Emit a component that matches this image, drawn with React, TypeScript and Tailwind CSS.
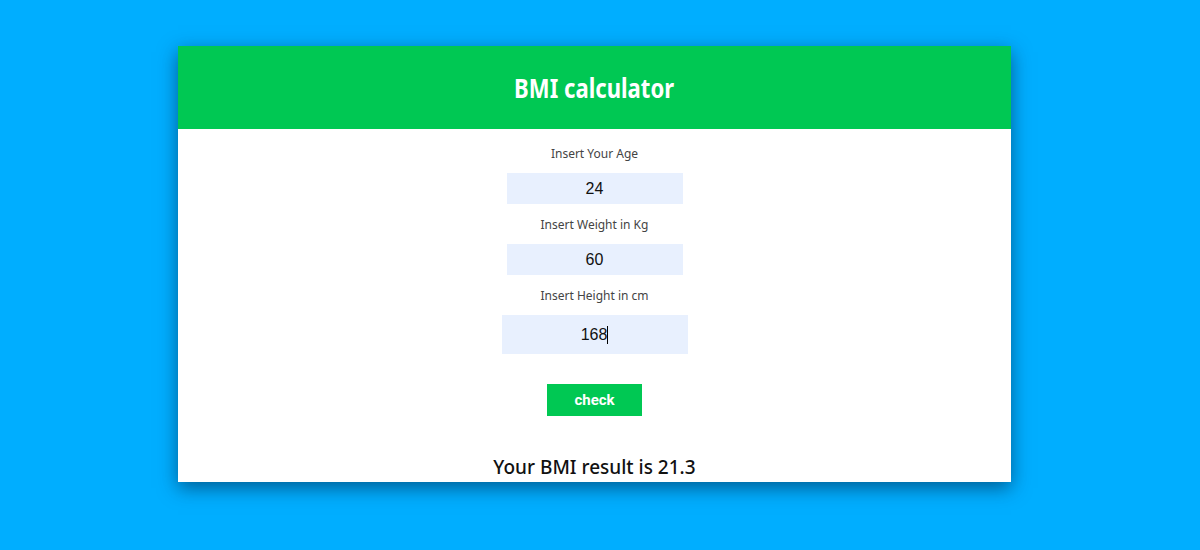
const fields = [
  { label: 'Insert Your Age', value: '24' },
  { label: 'Insert Weight in Kg', value: '60' },
  { label: 'Insert Height in cm', value: '168', focused: true },
];

export default function App() {
  return (
    <div className="min-h-[550px] w-full bg-[#00aeff] pt-[46px] pr-[11px] flex justify-center">
      <div className="w-[833px] h-[436px] bg-white shadow-[0_6px_18px_rgba(0,30,60,0.55)] flex flex-col">
        <div className="h-[83px] bg-[#00c853] flex items-center justify-center">
          <h1 className="text-white text-[26px] font-bold scale-x-[0.85] font-['Noto_Sans',sans-serif] leading-none">
            BMI calculator
          </h1>
        </div>
        <div className="flex flex-col items-center pt-[17px]">
          {fields.map((f, i) => (
            <div key={i} className="flex flex-col items-center">
              <label className="text-[12px] leading-[16px] text-[#444] font-['Noto_Sans',sans-serif]">{f.label}</label>
              {f.focused ? (
                <div className="mt-[11px] w-[186px] h-[39px] bg-[#e8f0fe] flex items-center justify-center text-[16px] text-[#111] font-['Liberation_Sans',Arial,sans-serif]">
                  <span>{f.value}</span>
                  <span className="w-px h-[18px] bg-black" />
                </div>
              ) : (
                <div className="mt-[11px] mb-[13px] w-[176px] h-[31px] bg-[#e8f0fe] flex items-center justify-center text-[16px] text-[#111] font-['Liberation_Sans',Arial,sans-serif]">
                  {f.value}
                </div>
              )}
            </div>
          ))}
          <button className="mt-[30px] w-[95px] h-[32px] bg-[#00c853] text-white text-[15px] font-bold font-['Roboto',sans-serif]">
            check
          </button>
          <p className="mt-[38px] text-[19px] leading-[26px] font-medium text-[#111] font-['Noto_Sans',sans-serif]">
            Your BMI result is 21.3
          </p>
        </div>
      </div>
    </div>
  );
}
